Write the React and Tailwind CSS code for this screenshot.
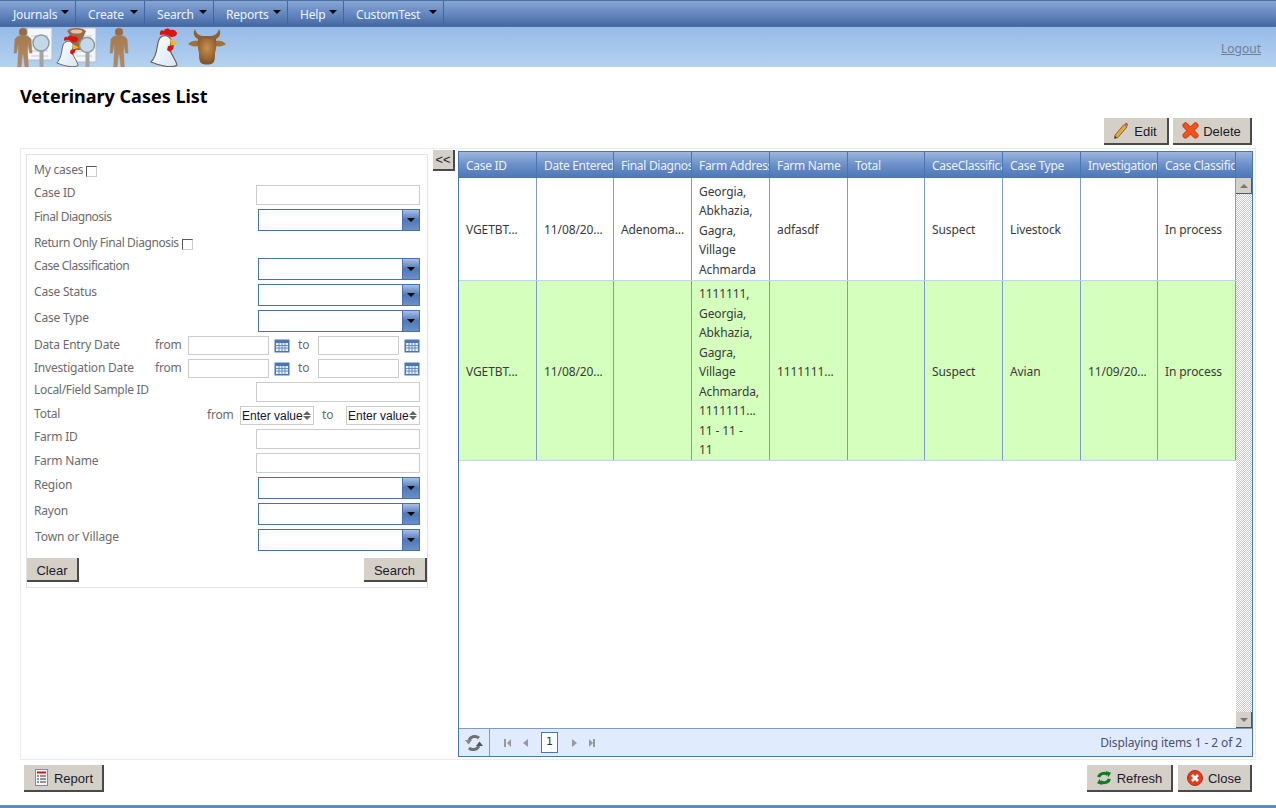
import React from "react";

const menus = [
  ["Journals", "w-[76px]"],
  ["Create", "w-[69px]"],
  ["Search", "w-[69px]"],
  ["Reports", "w-[74px]"],
  ["Help", "w-[56px]"],
  ["CustomTest", "w-[100px]"],
];

const columns = [
  ["Case ID", "w-[78px]"],
  ["Date Entered", "w-[77px]"],
  ["Final Diagnosis", "w-[78px]"],
  ["Farm Address", "w-[78px]"],
  ["Farm Name", "w-[78px]"],
  ["Total", "w-[77px]"],
  ["CaseClassification", "w-[78px]"],
  ["Case Type", "w-[78px]"],
  ["Investigation Date", "w-[77px]"],
  ["Case Classification", "w-[78px]"],
];

const rows = [
  {
    height: "h-[103px]",
    bg: "bg-white",
    cells: ["VGETBT...", "11/08/20...", "Adenoma...", ["Georgia,", "Abkhazia,", "Gagra,", "Village", "Achmarda"], "adfasdf", "", "Suspect", "Livestock", "", "In process"],
  },
  {
    height: "h-[180px]",
    bg: "bg-[#d5ffbd]",
    cells: ["VGETBT...", "11/08/20...", "", ["1111111,", "Georgia,", "Abkhazia,", "Gagra,", "Village", "Achmarda,", "1111111...", "11 - 11 -", "11"], "1111111...", "", "Suspect", "Avian", "11/09/20...", "In process"],
  },
];

const Person = ({ x }) => (
  <g transform={`translate(${x} 27)`}>
    <circle cx="9" cy="5" r="4" fill="#9c6b42" stroke="#8a8378" strokeWidth=".5" />
    <path
      d="M3.5 9.500C5 8.500 13 8.500 14.500 9.500L17 12 18 26h-2.500L14 16l-.5 9 .8 15h-3.300L9.500 27h-1L7 40H3.700l.8-15-.5-9-1.500 10H0L1 12z"
      fill="url(#skin)"
      stroke="#8a8378"
      strokeWidth=".5"
    />
  </g>
);

const Sheet = ({ x, w = 25, h = 32 }) => (
  <g>
    <rect x={x} y="28" width={w} height={h} fill="#f3f6fb" stroke="#b3bcc6" />
    <path
      d={`M${x + 4} 36h${w - 8}M${x + 4} 41h${w - 8}M${x + 4} 46h${w - 8}M${x + 4} 51h${w - 8}M${x + 4} 56h${w - 8}`}
      stroke="#c8ced5"
    />
  </g>
);

const Magnifier = ({ x, y, r = 7.5 }) => (
  <g>
    <rect x={x - 1.5} y={y + r} width="4" height="30" fill="#a2a2a2" />
    <circle cx={x} cy={y} r={r} fill="#c4d9e8" stroke="#8d9aa3" strokeWidth="1.5" />
  </g>
);

const Chicken = ({ x, y, scale = 1 }) => (
  <g transform={`translate(${x} ${y}) scale(${scale})`}>
    <path
      d="M11 9C15 6 20 8 21 12L20 22C22 28 26 32 27 37 24 40 12 39 1 34 3 32 6 27 7 20 8 15 8 11 11 9z"
      fill="url(#feather)"
      stroke="#6d6252"
      strokeWidth="1.2"
    />
    <path d="M10 7C9 3 12 1 14 3 15 0 19 0 20 2 23 1 26 2 27 5 27 8 24 9 21 9 17 6 13 6 10 7z" fill="#dc1410" />
    <path d="M20 11L28 15 21 18z" fill="#f2b90f" />
    <path d="M18 18l6-1-1 4-3 3-3-2z" fill="#dc1410" />
  </g>
);

const Cow = ({ x, y }) => (
  <g transform={`translate(${x} ${y})`}>
    <path d="M7 0C4 5 7 10 13 11H25C31 10 34 5 31 0 30 4 27 7 23 7H15C11 7 8 4 7 0z" fill="#8f6034" />
    <path d="M0 15C3 12 6 11 10 12V17C6 18 3 17 0 15zM38 15C35 12 32 11 28 12V17C32 18 35 17 38 15z" fill="#a0703c" />
    <path
      d="M10 10H28C29 16 28 20 27 24 27 28 27 32 25 34 22 36 16 36 13 34 11 32 11 28 11 24 10 20 9 16 10 10z"
      fill="url(#hide)"
    />
  </g>
);

const AppIcons = () => (
  <svg width="240" height="40" viewBox="0 27 240 40" className="block">
    <defs>
      <linearGradient id="skin" x1="0" y1="0" x2="0" y2="1">
        <stop offset="0" stopColor="#a87a4e" />
        <stop offset="1" stopColor="#b98a5c" />
      </linearGradient>
      <linearGradient id="feather" x1="0" y1="0" x2="1" y2="1">
        <stop offset="0" stopColor="#ffffff" />
        <stop offset="1" stopColor="#d5e6f4" />
      </linearGradient>
      <radialGradient id="hide" cx=".5" cy=".35" r=".7">
        <stop offset="0" stopColor="#c8924f" />
        <stop offset="1" stopColor="#7d4a22" />
      </radialGradient>
    </defs>
    <Sheet x={27} />
    <Person x={14} />
    <Magnifier x={41} y={43} r={8} />
    <Sheet x={72} w={24} h={34} />
    <path d="M67 31C70 27 83 27 86 31L83 38 86 50H70L72 38z" fill="#9c6b42" />
    <ellipse cx="76.500" cy="31.500" rx="6" ry="2" fill="#d9c9b4" />
    <Magnifier x={87} y={45} />
    <Chicken x={56} y={35} scale={0.82} />
    <Person x={110} />
    <Chicken x={150} y={28} />
    <Cow x={188} y={29} />
  </svg>
);

const Button = ({ children, className = "" }) => (
  <button
    className={`flex items-center justify-center border-r-2 border-b-2 border-[#4a4a4a] bg-[#d4d0c8] font-['Liberation_Sans',sans-serif] text-[13px] text-[#1a1a2e] ${className}`}
  >
    {children}
  </button>
);

const Label = ({ children, className = "tracking-[-0.2px]" }) => (
  <span className={`whitespace-nowrap text-xs text-[#6b6b6b] ${className}`}>{children}</span>
);

const TextRow = ({ label, labelClass = "tracking-[-0.2px]" }) => (
  <div className="mt-1 flex items-center justify-between pl-[7px] pr-[7px]">
    <Label className={`-mt-1 ${labelClass}`}>{label}</Label>
    <div className="h-5 w-[164px] border border-[#cccccc] bg-white" />
  </div>
);

const ComboRow = ({ label, className = "mt-1", labelClass = "tracking-[-0.2px]" }) => (
  <div className={`flex items-start justify-between pl-[7px] pr-[7px] ${className}`}>
    <Label className={labelClass}>{label}</Label>
    <div className="flex h-[22px] w-[162px] border border-[#4a6fb0] bg-white">
      <div className="ml-auto flex w-[17px] items-center justify-center border-l border-[#4a6fb0] bg-gradient-to-b from-[#a9c0e4] via-[#4f78b8] to-[#6b90c8]">
        <span className="h-0 w-0 border-x-[4px] border-t-[4px] border-x-transparent border-t-black" />
      </div>
    </div>
  </div>
);

const CalendarIcon = () => (
  <svg width="16" height="14" viewBox="0 0 16 14" className="block shrink-0">
    <rect x=".5" y=".5" width="15" height="13" fill="#4a78b5" />
    <rect x="2" y="4" width="12" height="8" fill="#e8eef6" />
    <path d="M2 6.500h12M2 9h12M5 4v8M8 4v8M11 4v8" stroke="#4a78b5" strokeWidth=".8" />
  </svg>
);

const DateRow = ({ label }) => (
  <div className="mt-1 flex items-center pl-[7px] pr-[7px]">
    <Label className="-mt-0.5 w-[121px] tracking-[-0.2px]">{label}</Label>
    <Label className="-mt-0.5 w-[33px] tracking-[-0.2px]">from</Label>
    <div className="h-[19px] w-[81px] border border-[#cccccc] bg-white" />
    <span className="ml-[5px]">
      <CalendarIcon />
    </span>
    <Label className="-mt-0.5 ml-[8px] w-[20px] tracking-[-0.2px]">to</Label>
    <div className="h-[19px] w-[81px] border border-[#cccccc] bg-white" />
    <span className="ml-[5px]">
      <CalendarIcon />
    </span>
  </div>
);

const SpinBox = () => (
  <div className="flex h-[19px] w-[74px] items-center justify-between border border-[#cccccc] bg-white pl-px pr-[2px] font-['Liberation_Sans',sans-serif] text-xs text-[#14142a]">
    <span className="whitespace-nowrap">Enter value</span>
    <span className="flex shrink-0 flex-col gap-px">
      <span className="h-0 w-0 border-x-[4px] border-b-[4px] border-x-transparent border-b-[#666666]" />
      <span className="h-0 w-0 border-x-[4px] border-t-[4px] border-x-transparent border-t-[#666666]" />
    </span>
  </div>
);

const CheckBox = () => (
  <span className="mt-[3px] block h-[11px] w-[11px] border border-b-[#cccccc] border-r-[#cccccc] border-l-[#555555] border-t-[#555555] bg-white" />
);

const SearchForm = () => (
  <div className="ml-[5px] mt-[5px] flex h-[434px] w-[402px] shrink-0 flex-col border border-[#e2e2e2] bg-white">
    <div className="mt-[7px] flex h-4 items-center gap-[3px] pl-[7px]">
      <Label>My cases</Label>
      <CheckBox />
    </div>
    <div className="mt-[3px]">
      <TextRow label="Case ID" />
    </div>
    <ComboRow label="Final Diagnosis" labelClass="tracking-[-0.5px]" />
    <div className="mt-1 flex h-4 items-center gap-[3px] pl-[7px]">
      <Label className="tracking-[-0.4px]">Return Only Final Diagnosis</Label>
      <CheckBox />
    </div>
    <ComboRow label="Case Classification" className="mt-[7px]" labelClass="tracking-[-0.45px]" />
    <ComboRow label="Case Status" />
    <ComboRow label="Case Type" />
    <DateRow label="Data Entry Date" />
    <DateRow label="Investigation Date" />
    <TextRow label="Local/Field Sample ID" labelClass="tracking-[-0.3px]" />
    <div className="mt-1 flex items-center pl-[7px] pr-[7px]">
      <Label className="-mt-1 w-[173px] tracking-[-0.2px]">Total</Label>
      <Label className="-mt-0.5 w-[33px] tracking-[-0.2px]">from</Label>
      <SpinBox />
      <Label className="-mt-0.5 ml-[8px] w-[24px] tracking-[-0.2px]">to</Label>
      <SpinBox />
    </div>
    <TextRow label="Farm ID" />
    <TextRow label="Farm Name" />
    <ComboRow label="Region" />
    <ComboRow label="Rayon" />
    <ComboRow label="Town or Village" labelClass="ml-px tracking-[-0.1px]" />
    <div className="mt-[7px] flex justify-between">
      <Button className="h-6 w-[52px] pt-[3px]">Clear</Button>
      <Button className="h-6 w-[63px] pt-[3px]">Search</Button>
    </div>
  </div>
);

const CasesGrid = () => (
  <div className="flex h-[606px] w-[795px] flex-col border border-[#4a75b5] bg-white text-xs tracking-[-0.1px] text-[#3a3a3a]">
    <div className="flex h-[26px] shrink-0 border-b border-[#4a75b5] bg-gradient-to-b from-[#9db7de] via-[#6c90c9] to-[#4f78b8] tracking-[-0.3px] text-[#eef3fb]">
      {columns.map(([title, width]) => (
        <div
          key={title}
          className={`${width} flex items-center overflow-hidden whitespace-nowrap border-r border-[#4a75b5] pl-[7px] pt-[3px]`}
        >
          {title}
        </div>
      ))}
      <div className="flex-1" />
    </div>
    <div className="flex min-h-0 flex-1">
      <div className="min-w-0 flex-1">
        {rows.map((row, index) => (
          <div key={index} className={`flex border-b border-[#c5d3e8] ${row.height} ${row.bg}`}>
            {row.cells.map((cell, i) => (
              <div
                key={i}
                className={`${columns[i][1]} flex items-center border-r border-[#7f9cc8] pl-[7px] ${Array.isArray(cell) ? "pt-[3px]" : "pt-[2px]"}`}
              >
                {Array.isArray(cell) ? (
                  <div className="leading-[19.5px]">
                    {cell.map((line, j) => (
                      <div key={j} className="whitespace-nowrap">
                        {line}
                      </div>
                    ))}
                  </div>
                ) : (
                  <span className="whitespace-nowrap">{cell}</span>
                )}
              </div>
            ))}
          </div>
        ))}
      </div>
      <div className="flex w-4 shrink-0 flex-col justify-between bg-[repeating-conic-gradient(#c8c8c8_0_25%,#ffffff_0_50%)] bg-[length:2px_2px]">
        <div className="flex h-4 items-center justify-center border-r border-b border-[#555555] bg-[#d4d0c8]">
          <span className="h-0 w-0 border-x-[4px] border-b-[4px] border-x-transparent border-b-[#777777]" />
        </div>
        <div className="flex h-4 items-center justify-center border-r border-b border-[#555555] bg-[#d4d0c8]">
          <span className="h-0 w-0 border-x-[4px] border-t-[4px] border-x-transparent border-t-[#777777]" />
        </div>
      </div>
    </div>
    <div className="flex h-[28px] shrink-0 items-center border-t border-[#7f9cc8] bg-[#e0ecfd]">
      <div className="flex h-full w-[31px] items-center justify-center border-r border-[#7f9cc8]">
        <svg width="18" height="18" viewBox="0 0 18 18" fill="none" stroke="#707070" strokeWidth="3">
          <path d="M4 6A6.500 6.500 0 0 1 14 4" />
          <path d="M14 12A6.500 6.500 0 0 1 4 14" />
          <path d="M0 6h7l-3.500 4.500z" fill="#8a8a8a" strokeWidth="0" />
          <path d="M18 12h-7l3.500-4.500z" fill="#555555" strokeWidth="0" />
        </svg>
      </div>
      <svg width="30" height="10" viewBox="0 0 30 10" className="ml-3.5" fill="#999999">
        <path d="M0 1h2v8H0zM7 1v8L3 5zM24 1v8l-5-4z" />
      </svg>
      <div className="ml-[7px] flex h-[21px] w-[17px] items-center justify-center border border-[#4a75b5] bg-white font-['DejaVu_Sans',sans-serif] text-[11px] text-[#333333]">
        1
      </div>
      <svg width="27" height="10" viewBox="0 0 27 10" className="ml-3.5" fill="#999999">
        <path d="M0 1v8l5-4zM17 1v8l4-4zM21 1h2v8h-2z" />
      </svg>
      <span className="ml-auto pr-[10px] text-[#4b4f6e]">Displaying items 1 - 2 of 2</span>
    </div>
  </div>
);

const App = () => (
  <div className="flex h-[808px] w-[1276px] flex-col overflow-hidden bg-white font-['Noto_Sans',sans-serif]">
    <nav className="flex h-[27px] shrink-0 border-y border-[#4a6fa8] bg-gradient-to-b from-[#88a5d2] via-[#6588c1] to-[#44699f] text-xs tracking-[-0.2px] text-[#eef3fb]">
      {menus.map(([name, width]) => (
        <div
          key={name}
          className={`${width} relative flex items-center border-r border-[#3f66a5] pl-3 pt-[2px] first:pl-[13px]`}
        >
          {name}
          <span className="absolute right-[6px] top-[9px] h-0 w-0 border-x-[4px] border-t-[4px] border-x-transparent border-t-black" />
        </div>
      ))}
    </nav>
    <div className="flex h-[40px] shrink-0 items-start justify-between bg-gradient-to-b from-[#96bbe8] to-[#b5d1ef] pr-[15px]">
      <AppIcons />
      <a className="mt-[14px] text-xs text-[#6e7f99] underline">Logout</a>
    </div>

    <h1 className="mt-[17px] pl-5 text-lg font-bold leading-[24px] text-black">Veterinary Cases List</h1>

    <div className="mt-[10px] flex justify-end gap-1 pr-6">
      <Button className="h-[27px] w-[65px] gap-[6px]">
        <svg width="14" height="17" viewBox="0 0 14 17">
          <path d="M10 2.500l3 2.500L4 15.500 .5 16.500 1 13z" fill="#e2a63a" stroke="#6f5a2a" strokeWidth=".8" />
          <path d="M10.500 2l1.500-1.500 2 1.500-.5 2.500z" fill="#d04848" />
          <path d="M.5 16.500L1 14l2 1.500z" fill="#333333" />
        </svg>
        <span className="mt-[3px]">Edit</span>
      </Button>
      <Button className="h-[27px] w-[79px] gap-1">
        <svg width="17" height="17" viewBox="0 0 17 17" strokeLinecap="round">
          <path d="M3.500 3.500l10 10M13.500 3.500l-10 10" stroke="#c23a0e" strokeWidth="6" />
          <path d="M3.500 3.500l10 10M13.500 3.500l-10 10" stroke="#f3531a" strokeWidth="4.500" />
        </svg>
        <span className="mt-[3px]">Delete</span>
      </Button>
    </div>

    <div className="ml-5 mt-[3px] flex h-[612px] w-[1236px] shrink-0 border border-[#e8ecf2]">
      <SearchForm />
      <Button className="ml-[5px] mt-px h-[21px] w-[22px] shrink-0 text-xs">&lt;&lt;</Button>
      <div className="ml-[3px] mt-[2px]">
        <CasesGrid />
      </div>
    </div>

    <div className="mt-[5px] flex justify-between px-6">
      <Button className="h-[27px] w-[80px] gap-[6px] pl-[2px]">
        <svg width="13" height="17" viewBox="0 0 13 17">
          <rect x=".5" y=".5" width="12" height="16" fill="#f2f4f8" stroke="#7d8ea6" />
          <rect x="2" y="2.500" width="9" height="2" fill="#d01818" />
          <path d="M2 7h2M5 7h6M2 10h2M5 10h6M2 13h2M5 13h6" stroke="#333333" />
        </svg>
        <span className="mt-[3px]">Report</span>
      </Button>
      <div className="flex gap-[5px]">
        <Button className="h-[27px] w-[86px] gap-[5px]">
          <svg width="16" height="14" viewBox="0 0 18 16" fill="none" stroke="#0f7a1e" strokeWidth="3.500">
            <path d="M3 7a6 5 0 0 1 10-3" />
            <path d="M15 9a6 5 0 0 1-10 3" />
            <path d="M11 0l6 2-3 5z" fill="#0f7a1e" strokeWidth="0" />
            <path d="M7 16l-6-2 3-5z" fill="#0f7a1e" strokeWidth="0" />
          </svg>
          <span className="mt-[3px]">Refresh</span>
        </Button>
        <Button className="h-[27px] w-[74px] gap-[5px]">
          <svg width="16" height="16" viewBox="0 0 16 16">
            <circle cx="8" cy="8" r="7.500" fill="#e23d1e" stroke="#b82b10" />
            <path d="M5 5l6 6M11 5l-6 6" stroke="#ffffff" strokeWidth="2.600" />
          </svg>
          <span className="mt-[3px]">Close</span>
        </Button>
      </div>
    </div>

    <div className="mt-auto h-[3px] shrink-0 bg-[#5f8db5]" />
  </div>
);

export default App;
